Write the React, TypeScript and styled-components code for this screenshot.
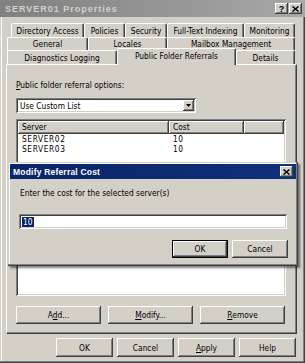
import styled, { createGlobalStyle, css } from 'styled-components';

const face = '#d4d0c8';
const light = '#ffffff';
const shadow = '#808080';
const dark = '#404040';
const navy = '#0a246a';

const GlobalStyle = createGlobalStyle`
    * { box-sizing: border-box; }
    html, body { margin: 0; padding: 0; background: ${face}; }
    body {
        font-family: "DejaVu Sans Condensed", "Liberation Sans", Arial, sans-serif;
        font-size: 8.3px;
        color: #000;
        overflow: hidden;
    }
`;

const raised = css`
    background: ${face};
    box-shadow: inset -1px -1px 0 ${dark}, inset 1px 1px 0 ${light}, inset -2px -2px 0 ${shadow}, inset 2px 2px 0 ${face};
`;

const sunken = css`
    background: #fff;
    box-shadow: inset 1px 1px 0 ${shadow}, inset -1px -1px 0 ${light}, inset 2px 2px 0 ${dark}, inset -2px -2px 0 ${face};
`;

const Window = styled.div`
    position: relative;
    width: 305px;
    height: 363px;
    background: ${face};
    display: flex;
    flex-direction: column;
    box-shadow: inset -1px -1px 0 ${dark}, inset -2px -2px 0 ${shadow}, inset 1px 1px 0 ${face}, inset 2px 2px 0 ${light};
`;

const TitleBar = styled.div<{ $active?: boolean }>`
    height: ${(p) => (p.$active ? '15px' : '17px')};
    display: flex;
    align-items: center;
    padding: 0 3px 0 ${(p) => (p.$active ? '3px' : '5px')};
    background: ${(p) => (p.$active ? `linear-gradient(90deg, ${navy}, #10307a)` : 'linear-gradient(90deg, #808080, #a8a8a8)')};
    color: ${(p) => (p.$active ? '#fff' : face)};
    font-family: "Liberation Sans", Arial, sans-serif;
    font-weight: bold;
    font-size: ${(p) => (p.$active ? '8.5px' : '9px')};
    letter-spacing: ${(p) => (p.$active ? '0.2px' : '1px')};
`;

const TitleText = styled.span`
    flex: 1;
`;

const TitleButton = styled.div`
    ${raised};
    width: 13px;
    height: 11px;
    display: flex;
    align-items: center;
    justify-content: center;
    font-size: 9px;
    font-weight: bold;
    letter-spacing: 0;
    color: #000;
    margin-left: 1px;
`;

const Tabs = styled.div`
    margin-top: 6px;
    display: flex;
    flex-direction: column;
`;

const TabRow = styled.div<{ $indent: number; $h: number }>`
    display: flex;
    height: ${(p) => p.$h}px;
    padding-left: ${(p) => p.$indent}px;
`;

const Tab = styled.div<{ $w: number; $selected?: boolean }>`
    width: ${(p) => p.$w}px;
    height: 100%;
    display: flex;
    align-items: center;
    justify-content: center;
    background: ${face};
    border-top: 1px solid ${light};
    border-left: 1px solid ${light};
    border-right: 1px solid ${dark};
    border-radius: 2px 2px 0 0;
    box-shadow: inset -1px 0 0 ${shadow};
    white-space: nowrap;
    ${(p) =>
        p.$selected &&
        css`
            position: relative;
            z-index: 1;
            top: -2px;
            height: calc(100% + 3px);
            padding-bottom: 3px;
        `}
`;

const Panel = styled.div`
    margin: 0 8px 0 6px;
    height: 270px;
    border-top: 1px solid ${light};
    border-left: 1px solid ${light};
    border-right: 1px solid ${dark};
    border-bottom: 1px solid ${dark};
    box-shadow: inset -1px -1px 0 ${shadow};
    padding: 15px 9px 0 9px;
    display: flex;
    flex-direction: column;
`;

const Label = styled.div`
    height: 11px;
    line-height: 11px;
    margin-bottom: 7px;
`;

const Combo = styled.div`
    ${sunken};
    width: 180px;
    height: 15px;
    display: flex;
    align-items: center;
    padding: 2px 2px 2px 4px;
`;

const ComboText = styled.span`
    flex: 1;
`;

const ArrowButton = styled.div`
    ${raised};
    width: 11px;
    height: 11px;
    display: flex;
    align-items: center;
    justify-content: center;
`;

const ListView = styled.div`
    ${sunken};
    margin-top: 6px;
    width: 270px;
    height: 177px;
    padding: 2px;
`;

const HeaderRow = styled.div`
    display: flex;
    height: 13px;
`;

const HeaderCell = styled.div<{ $w?: number }>`
    ${raised};
    ${(p) => (p.$w ? `width: ${p.$w}px;` : 'flex: 1;')}
    height: 13px;
    line-height: 13px;
    padding-left: 4px;
`;

const Row = styled.div`
    display: flex;
    height: 10px;
    line-height: 10px;
    letter-spacing: 0.6px;
    &:first-of-type {
        margin-top: 3px;
    }
`;

const Cell = styled.div<{ $w: number }>`
    width: ${(p) => p.$w}px;
    padding-left: 4px;
`;

const ButtonRow = styled.div<{ $gap: number; $end?: boolean; $top?: number }>`
    display: flex;
    gap: ${(p) => p.$gap}px;
    margin-top: ${(p) => p.$top ?? 0}px;
    justify-content: ${(p) => (p.$end ? 'flex-end' : 'flex-start')};
`;

const Button = styled.div<{ $w: number; $h: number; $default?: boolean }>`
    ${raised};
    width: ${(p) => p.$w}px;
    height: ${(p) => p.$h}px;
    display: flex;
    align-items: center;
    justify-content: center;
    ${(p) =>
        p.$default &&
        css`
            box-shadow: inset 0 0 0 1px #000, inset -2px -2px 0 ${dark}, inset 2px 2px 0 ${light}, inset -3px -3px 0 ${shadow};
        `}
`;

const Footer = styled.div`
    margin-top: 4px;
    padding-right: 9px;
`;

const Modal = styled.div`
    position: absolute;
    left: 8px;
    top: 162px;
    width: 290px;
    height: 104px;
    background: ${face};
    padding: 2px;
    box-shadow: inset -1px -1px 0 ${dark}, inset -2px -2px 0 ${shadow}, inset 1px 1px 0 ${face}, inset 2px 2px 0 ${light},
        2px 2px 2px rgba(0, 0, 0, 0.5);
    display: flex;
    flex-direction: column;
`;

const ModalBody = styled.div`
    padding: 9px 8px 0 10px;
    display: flex;
    flex-direction: column;
`;

const Prompt = styled.div`
    height: 11px;
    line-height: 11px;
`;

const TextBox = styled.div`
    ${sunken};
    margin-top: 15px;
    margin-left: -1px;
    width: 268px;
    height: 15px;
    padding: 2px 3px;
    display: flex;
    align-items: center;
`;

const Selected = styled.span`
    background: ${navy};
    color: #fff;
    padding: 0 1px;
    line-height: 10px;
`;

const U = styled.span`
    text-decoration: underline;
`;

function CloseGlyph() {
    return (
        <svg width="7" height="6" viewBox="0 0 7 6">
            <path d="M0.5 0.5 L6.5 5.5 M6.5 0.5 L0.5 5.5" stroke="#000" strokeWidth="1.5" />
        </svg>
    );
}

function App() {
    return (
        <>
            <GlobalStyle />
            <Window>
                <TitleBar>
                    <TitleText>SERVER01 Properties</TitleText>
                    <TitleButton>?</TitleButton>
                    <TitleButton>
                        <CloseGlyph />
                    </TitleButton>
                </TitleBar>
                <Tabs>
                    <TabRow $indent={11} $h={14}>
                        <Tab $w={73}>Directory Access</Tab>
                        <Tab $w={41}>Policies</Tab>
                        <Tab $w={42}>Security</Tab>
                        <Tab $w={77}>Full-Text Indexing</Tab>
                        <Tab $w={51}>Monitoring</Tab>
                    </TabRow>
                    <TabRow $indent={7} $h={13}>
                        <Tab $w={81}>General</Tab>
                        <Tab $w={79}>Locales</Tab>
                        <Tab $w={128}>Mailbox Management</Tab>
                    </TabRow>
                    <TabRow $indent={7} $h={14}>
                        <Tab $w={110}>Diagnostics Logging</Tab>
                        <Tab $w={119} $selected>
                            Public Folder Referrals
                        </Tab>
                        <Tab $w={59}>Details</Tab>
                    </TabRow>
                </Tabs>
                <Panel>
                    <Label>
                        <U>P</U>ublic folder referral options:
                    </Label>
                    <Combo>
                        <ComboText>Use Custom List</ComboText>
                        <ArrowButton>
                            <svg width="5" height="3" viewBox="0 0 5 3">
                                <path d="M0 0 H5 L2.5 3 Z" fill="#000" />
                            </svg>
                        </ArrowButton>
                    </Combo>
                    <ListView>
                        <HeaderRow>
                            <HeaderCell $w={151}>Server</HeaderCell>
                            <HeaderCell $w={75}>Cost</HeaderCell>
                            <HeaderCell />
                        </HeaderRow>
                        <Row>
                            <Cell $w={151}>SERVER02</Cell>
                            <Cell $w={75}>10</Cell>
                        </Row>
                        <Row>
                            <Cell $w={151}>SERVER03</Cell>
                            <Cell $w={75}>10</Cell>
                        </Row>
                    </ListView>
                    <ButtonRow $gap={7} $top={10}>
                        <Button $w={85} $h={18}>
                            A<U>d</U>d...
                        </Button>
                        <Button $w={85} $h={18}>
                            <U>M</U>odify...
                        </Button>
                        <Button $w={85} $h={18}>
                            <U>R</U>emove
                        </Button>
                    </ButtonRow>
                </Panel>
                <Footer>
                    <ButtonRow $gap={4} $end>
                        <Button $w={57} $h={19}>OK</Button>
                        <Button $w={57} $h={19}>Cancel</Button>
                        <Button $w={57} $h={19}>
                            <U>A</U>pply
                        </Button>
                        <Button $w={57} $h={19}>Help</Button>
                    </ButtonRow>
                </Footer>
                <Modal>
                    <TitleBar $active>
                        <TitleText>Modify Referral Cost</TitleText>
                        <TitleButton>
                            <CloseGlyph />
                        </TitleButton>
                    </TitleBar>
                    <ModalBody>
                        <Prompt>Enter the cost for the selected server(s)</Prompt>
                        <TextBox>
                            <Selected>10</Selected>
                        </TextBox>
                        <ButtonRow $gap={4} $end $top={11}>
                            <Button $w={56} $h={18} $default>
                                OK
                            </Button>
                            <Button $w={56} $h={18}>Cancel</Button>
                        </ButtonRow>
                    </ModalBody>
                </Modal>
            </Window>
        </>
    );
}

export default App;
